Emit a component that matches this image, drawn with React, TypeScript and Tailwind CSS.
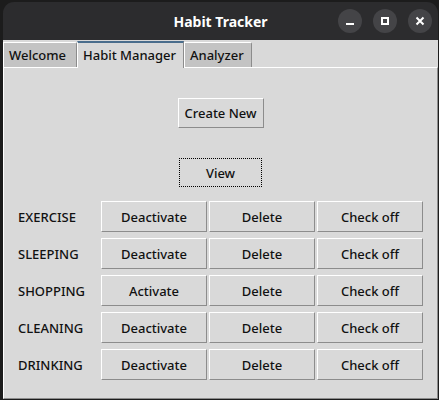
import React from "react";

const font = { fontFamily: '"Noto Sans", "DejaVu Sans", sans-serif' };

function TkButton({ children, w, h, focus }: { children: React.ReactNode; w: string; h: string; focus?: boolean }) {
  return (
    <div
      className={
        "flex items-center justify-center pt-[2px] bg-[#d9d9d9] text-[13px] font-medium text-[#111111] box-border " +
        w +
        " " +
        h +
        (focus
          ? " border border-dotted border-black"
          : " border border-t-white border-l-white border-r-[#8c8c8c] border-b-[#8c8c8c]")
      }
    >
      {children}
    </div>
  );
}

const habits = [
  { name: "EXERCISE", act: "Deactivate" },
  { name: "SLEEPING", act: "Deactivate" },
  { name: "SHOPPING", act: "Activate" },
  { name: "CLEANING", act: "Deactivate" },
  { name: "DRINKING", act: "Deactivate" },
];

export default function App() {
  return (
    <div className="w-[439px] h-[400px] bg-[#1c1c1c] overflow-hidden" style={font}>
      <div className="ml-[3px] mt-[2px] w-[435px] h-[397px] rounded-t-[11px] bg-[#2c2c2e] flex flex-col overflow-hidden">
        {/* title bar */}
        <div className="relative h-[38px] shrink-0 flex items-center justify-center">
          <span className="text-white font-bold text-[14px]">Habit Tracker</span>
          <div className="absolute right-[6px] top-[7px] flex gap-[11px]">
            <div className="w-[24px] h-[24px] rounded-full bg-[#444447] flex items-center justify-center">
              <div className="w-[8px] h-[2px] bg-white mt-[6px]" />
            </div>
            <div className="w-[24px] h-[24px] rounded-full bg-[#444447] flex items-center justify-center">
              <div className="w-[8px] h-[8px] border-2 border-white" />
            </div>
            <div className="w-[24px] h-[24px] rounded-full bg-[#444447] flex items-center justify-center">
              <svg width="10" height="10" viewBox="0 0 10 10">
                <path d="M1.5 1.5 L8.5 8.5 M8.5 1.5 L1.5 8.5" stroke="white" strokeWidth="2" />
              </svg>
            </div>
          </div>
        </div>
        {/* body */}
        <div className="flex-1 bg-[#d9d9d9] flex flex-col">
          {/* tabs */}
          <div className="h-[27px] shrink-0 flex items-end text-[13px] font-medium text-[#111111]">
            <div className="h-[25px] w-[74px] bg-[#c3c3c3] border-t border-l border-t-white border-l-white border-r border-r-[#8c8c8c] rounded-tr-[2px] flex items-center pl-[5px] pt-[1px] box-border">
              Welcome
            </div>
            <div className="h-[27px] w-[107px] bg-[#d9d9d9] border-t-2 border-t-[#4a6d8c] border-r border-r-[#8c8c8c] border-l border-l-white flex items-center pl-[5px] box-border relative z-10 -mb-[1px]">
              Habit Manager
            </div>
            <div className="h-[25px] w-[68px] bg-[#c3c3c3] border-t border-t-white border-l border-l-white border-r border-r-[#8c8c8c] rounded-tr-[2px] flex items-center pl-[5px] pt-[1px] box-border">
              Analyzer
            </div>
          </div>
          {/* pane */}
          <div className="flex-1 border-t border-t-white border-l border-l-white border-r border-r-[#8c8c8c] border-b border-b-[#8c8c8c] flex flex-col items-center box-border">
            <div className="mt-[30px]">
              <TkButton w="w-[86px]" h="h-[30px]">Create New</TkButton>
            </div>
            <div className="mt-[30px]">
              <TkButton w="w-[83px]" h="h-[29px]" focus>View</TkButton>
            </div>
            <div className="mt-[14px] self-stretch flex flex-col gap-[6px]">
              {habits.map((h) => (
                <div key={h.name} className="flex items-center h-[31px]">
                  <div className="w-[97px] pl-[14px] pt-[2px] text-[13px] font-medium text-[#111111] box-border">{h.name}</div>
                  <div className="flex gap-[2px]">
                    <TkButton w="w-[106px]" h="h-[31px]">{h.act}</TkButton>
                    <TkButton w="w-[106px]" h="h-[31px]">Delete</TkButton>
                    <TkButton w="w-[106px]" h="h-[31px]">Check off</TkButton>
                  </div>
                </div>
              ))}
            </div>
          </div>
        </div>
      </div>
    </div>
  );
}
